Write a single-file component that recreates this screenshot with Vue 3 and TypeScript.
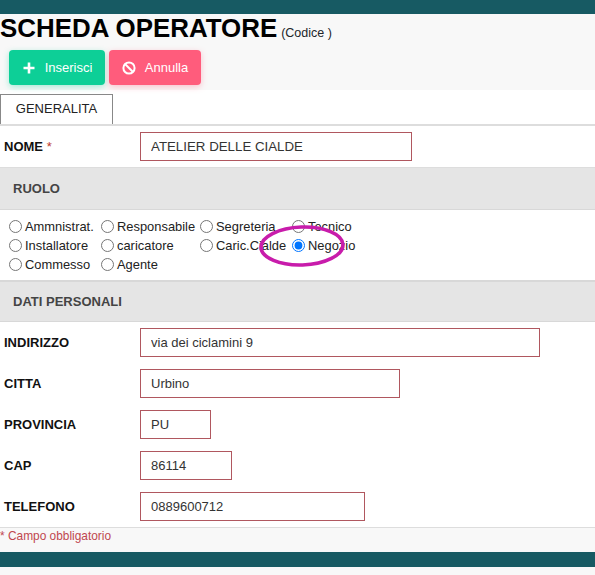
<script setup lang="ts">
interface Field { label: string; value: string; width: number }
const fields: Field[] = [
  { label: 'INDIRIZZO', value: 'via dei ciclamini 9', width: 400 },
  { label: 'CITTA', value: 'Urbino', width: 260 },
  { label: 'PROVINCIA', value: 'PU', width: 71 },
  { label: 'CAP', value: '86114', width: 92 },
  { label: 'TELEFONO', value: '0889600712', width: 225 },
]
const roles = [
  ['Ammnistrat.', 'Responsabile', 'Segreteria', 'Tecnico'],
  ['Installatore', 'caricatore', 'Caric.Cialde', 'Negozio'],
  ['Commesso', 'Agente'],
]
</script>

<template>
  <div class="page">
    <div class="topbar"></div>
    <header class="head">
      <h1 class="title">SCHEDA OPERATORE<small class="code">(Codice )</small></h1>
      <div class="actions">
        <button class="btn green" type="button">
          <svg class="ic" viewBox="0 0 14 14" width="14" height="14"><path d="M7 1.5v11M1.5 7h11" stroke="#fff" stroke-width="2.6" fill="none"/></svg>
          Inserisci
        </button>
        <button class="btn pink" type="button">
          <svg class="ic" viewBox="0 0 14 14" width="14" height="14"><circle cx="7" cy="7" r="5.6" stroke="#fff" stroke-width="2" fill="none"/><path d="M3 3l8 8" stroke="#fff" stroke-width="2"/></svg>
          Annulla
        </button>
      </div>
    </header>
    <div class="tabs"><div class="tab">GENERALITA</div></div>
    <div class="row nome">
      <label class="lab">NOME <span class="req">*</span></label>
      <input class="inp" style="width: 272px" value="ATELIER DELLE CIALDE" readonly />
    </div>
    <div class="section sec1">RUOLO</div>
    <div class="roles">
      <div v-for="(line, i) in roles" :key="i" class="rline">
        <label v-for="r in line" :key="r" class="radio">
          <input type="radio" name="ruolo" :checked="r === 'Negozio'" />
          <span>{{ r }}</span>
        </label>
      </div>
      <svg class="ring" viewBox="0 0 90 46" width="90" height="46"><ellipse cx="45" cy="23" rx="41" ry="19" fill="none" stroke="#c81cab" stroke-width="3.6" transform="rotate(-2 45 23)"/></svg>
    </div>
    <div class="section sec2">DATI PERSONALI</div>
    <div class="fields">
      <div v-for="f in fields" :key="f.label" class="row">
        <label class="lab">{{ f.label }}</label>
        <input class="inp" :style="{ width: f.width + 'px' }" :value="f.value" readonly />
      </div>
    </div>
    <footer class="foot">* Campo obbligatorio</footer>
    <div class="bottombar"></div>
    <div class="tail"></div>
  </div>
</template>

<style>
html, body { margin: 0; background: #fff; }
</style>

<style scoped>
.page { width: 595px; height: 575px; overflow: hidden; font-family: "Liberation Sans", Arial, sans-serif; font-size: 14px; color: #212529; background: #fff; }
.topbar { height: 14px; background: #175a63; }
.head { height: 76px; background: #f8f8f8; box-sizing: border-box; }
.title { margin: 0; font-size: 25.9px; line-height: 29px; height: 29px; font-weight: 700; color: #000; white-space: nowrap; }
.code { margin-left: 4px; font-size: 12.5px; line-height: 1; font-weight: 400; color: #212529; }
.actions { display: flex; gap: 4px; margin: 7px 0 0 9px; }
.btn { height: 35px; border: 0; border-radius: 4px; color: #fff; font: 13px "Liberation Sans", Arial, sans-serif; display: flex; align-items: center; gap: 9px; padding: 0; justify-content: center; }
.green { width: 96px; background: #0dcf97; box-shadow: 0 2px 6px rgba(13, 207, 151, .35); }
.pink { width: 92px; background: #ff5c7c; box-shadow: 0 2px 6px rgba(255, 92, 124, .35); }
.tabs { height: 36px; box-sizing: border-box; padding-top: 4px; border-bottom: 2px solid #ddd; }
.tab { width: 113px; height: 30px; box-sizing: border-box; border: 1px solid #888; border-bottom: 0; text-align: center; line-height: 27px; font-size: 13px; color: #222; }
.row { height: 41px; display: flex; align-items: center; box-sizing: border-box; }
.lab { width: 140px; padding-left: 4px; box-sizing: border-box; font-weight: 700; font-size: 13px; color: #111; flex: none; }
.req { color: #c0392b; font-weight: 400; }
.inp { height: 29px; box-sizing: border-box; border: 1px solid #b0575f; padding: 0 10px; font: 13px "Liberation Sans", Arial, sans-serif; color: #333; background: #fff; outline: 0; }
.nome .inp { font-size: 13.3px; }
.section { box-sizing: border-box; background: #e5e5e5; border-bottom: 1px solid #d8d8d8; padding-left: 13px; font-size: 13px; font-weight: 700; color: #444; }
.sec1 { height: 43px; border-top: 1px solid #ddd; line-height: 41px; }
.sec2 { height: 42px; border-top: 2px solid #d8d8d8; line-height: 40px; }
.roles { position: relative; height: 70px; box-sizing: border-box; padding-top: 7px; }
.rline { height: 19px; display: flex; padding-left: 9px; }
.radio { display: flex; align-items: center; gap: 3px; font-size: 12.9px; color: #222; white-space: nowrap; }
.radio input { width: 13px; height: 13px; margin: 0; flex: none; }
.radio:nth-child(1) { width: 92px; }
.radio:nth-child(2) { width: 99px; }
.radio:nth-child(3) { width: 92px; }
.ring { position: absolute; left: 257px; top: 13px; pointer-events: none; }
.fields { height: 205px; }
.foot { height: 25px; box-sizing: border-box; border-top: 1px solid #ddd; background: #f8f8f8; font-size: 11.9px; line-height: 16px; color: #c0474f; }
.bottombar { height: 15px; background: #175a63; }
.tail { height: 8px; background: #f8f8f8; }
</style>
